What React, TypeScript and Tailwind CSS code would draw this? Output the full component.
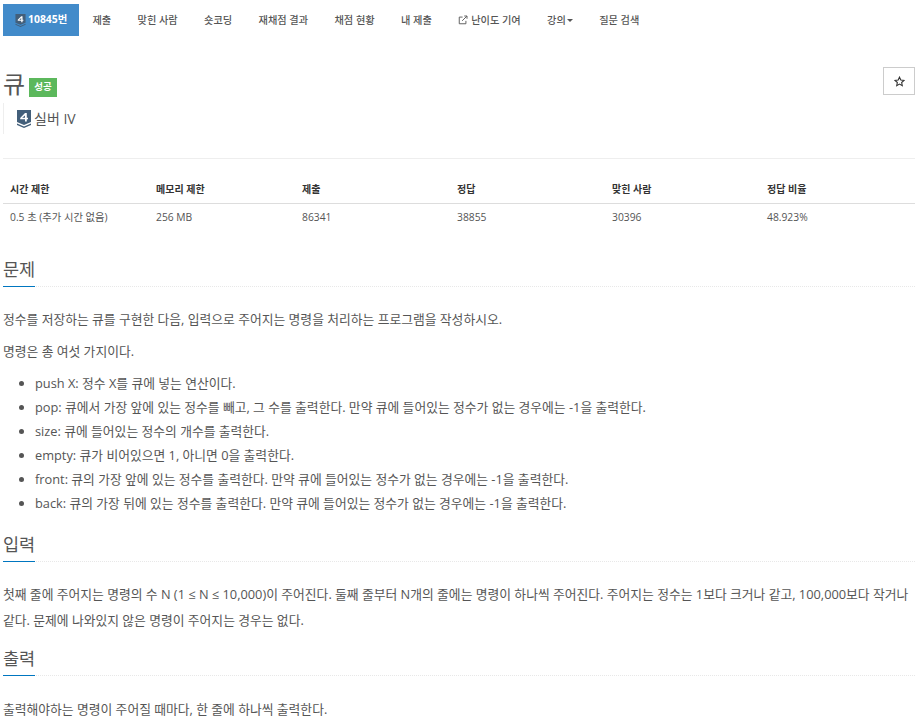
const font = "font-['Open_Sans','Noto_Sans_CJK_KR',sans-serif]";

const navItems = ["제출", "맞힌 사람", "숏코딩", "재채점 결과", "채점 현황", "내 제출"];

function TierIcon({ className }: { className: string }) {
  return (
    <svg viewBox="0 0 14 18" className={className}>
      <path d="M0 0H14V12L7 15L0 12Z" fill="#435F7A" />
      <path d="M0 13.5L7 16.5L14 13.5V15L7 18L0 15Z" fill="#435F7A" />
      <path d="M8 3H9.8V7.8H11V9.3H9.8V11.5H8V9.3H3.2V8L8 3ZM8 5.6L5.2 7.8H8Z" fill="#fff" />
    </svg>
  );
}

function SectionTitle({ title }: { title: string }) {
  return (
    <div className="border-b border-dotted border-[#e8e8e8]">
      <h2 className="inline-block border-b border-[#0076c0] text-[17.5px] leading-[26px] pb-[4px] mb-[-1px] font-normal text-[#555]">
        {title}
      </h2>
    </div>
  );
}

const listItems = [
  "push X: 정수 X를 큐에 넣는 연산이다.",
  "pop: 큐에서 가장 앞에 있는 정수를 빼고, 그 수를 출력한다. 만약 큐에 들어있는 정수가 없는 경우에는 -1을 출력한다.",
  "size: 큐에 들어있는 정수의 개수를 출력한다.",
  "empty: 큐가 비어있으면 1, 아니면 0을 출력한다.",
  "front: 큐의 가장 앞에 있는 정수를 출력한다. 만약 큐에 들어있는 정수가 없는 경우에는 -1을 출력한다.",
  "back: 큐의 가장 뒤에 있는 정수를 출력한다. 만약 큐에 들어있는 정수가 없는 경우에는 -1을 출력한다.",
];

const columns = [
  { w: "w-[146px]", head: "시간 제한", value: "0.5 초 (추가 시간 없음)" },
  { w: "w-[146px]", head: "메모리 제한", value: "256 MB" },
  { w: "w-[155px]", head: "제출", value: "86341" },
  { w: "w-[155px]", head: "정답", value: "38855" },
  { w: "w-[155px]", head: "맞힌 사람", value: "30396" },
  { w: "w-[155px]", head: "정답 비율", value: "48.923%" },
];

export default function App() {
  return (
    <div className={`${font} w-[921px] h-[722px] overflow-hidden bg-white pl-[3px] pr-[6px] pt-[4px] text-[#555]`}>
      <nav className="flex h-[32px] items-center text-[10.2px] font-medium text-[#555]">
        <a className="flex h-full items-center gap-[2px] bg-[#428bca] pl-[12px] pr-[12px] text-white font-bold">
          <TierIcon className="w-[11px] h-[13px]" />
          <span className="text-[10.4px]">10845번</span>
        </a>
        <div className="flex items-center pt-[1px]">
          {navItems.map((item) => (
            <a key={item} className="px-[13.2px]">{item}</a>
          ))}
          <a className="flex items-center gap-[3px] px-[13.2px]">
            <svg viewBox="0 0 12 12" className="w-[10px] h-[10px]" fill="none" stroke="#555" strokeWidth="1.1">
              <path d="M9.5 7V10.5H1.5V2.5H5.5" />
              <path d="M5 7L10.5 1.5M7.5 1.2H10.8V4.5" />
            </svg>
            난이도 기여
          </a>
          <a className="flex items-center gap-[1px] px-[13.2px]">
            강의
            <span className="border-x-[3px] border-t-[3px] border-x-transparent border-t-[#555]" />
          </a>
          <a className="px-[13.2px]">질문 검색</a>
        </div>
      </nav>

      <div className="mt-[32px] flex items-start justify-between">
        <div className="flex items-center h-[32px]">
          <h1 className="text-[24px] leading-[32px] font-normal text-[#555]">큐</h1>
          <span className="ml-[4px] mt-[7px] flex h-[19px] w-[28px] items-center justify-center bg-[#5cb85c] text-[9.5px] font-bold text-white">성공</span>
        </div>
        <button className="flex h-[28px] w-[32px] items-center justify-center border border-[#ccc] text-[#333] mt-[-1px]">
          <svg viewBox="0 0 24 24" className="w-[11px] h-[11px]" fill="none" stroke="#333" strokeWidth="2.4">
            <path d="M12 2.5L14.9 8.8L21.8 9.6L16.7 14.3L18.1 21.1L12 17.7L5.9 21.1L7.3 14.3L2.2 9.6L9.1 8.8Z" />
          </svg>
        </button>
      </div>

      <div className="mt-[3px] flex h-[31px] items-center gap-[3px] border-l border-[#eee] pl-[13px] text-[14px] text-[#555]">
        <TierIcon className="w-[14px] h-[18px]" />
        <span>실버 IV</span>
      </div>

      <div className="mt-[24px] border-t border-[#eee]" />

      <div className="mt-[16px]">
        <div className="flex h-[29px] items-center border-b border-[#ddd] text-[10px] font-bold text-[#333]">
          {columns.map((c) => (
            <div key={c.head} className={`${c.w} pl-[7px]`}>{c.head}</div>
          ))}
        </div>
        <div className="flex h-[27px] items-center text-[10.3px] text-[#555]">
          {columns.map((c) => (
            <div key={c.head} className={`${c.w} pl-[7px]`}>{c.value}</div>
          ))}
        </div>
      </div>

      <div className="mt-[25px]"><SectionTitle title="문제" /></div>
      <div className="mt-[16px] text-[12.8px] leading-[32px]">
        <p className="h-[32px]">정수를 저장하는 큐를 구현한 다음, 입력으로 주어지는 명령을 처리하는 프로그램을 작성하시오.</p>
        <p className="h-[32px]">명령은 총 여섯 가지이다.</p>
      </div>
      <ul className="mt-[4px] list-disc pl-[32px] text-[12.8px] leading-[24px] marker:text-[#555]">
        {listItems.map((item) => (
          <li key={item}>{item}</li>
        ))}
      </ul>

      <div className="mt-[16px]"><SectionTitle title="입력" /></div>
      <p className="mt-[19px] text-[12.8px] leading-[26px]">
        첫째 줄에 주어지는 명령의 수 N (1 ≤ N ≤ 10,000)이 주어진다. 둘째 줄부터 N개의 줄에는 명령이 하나씩 주어진다. 주어지는 정수는 1보다 크거나 같고, 100,000보다 작거나 같다. 문제에 나와있지 않은 명령이 주어지는 경우는 없다.
      </p>

      <div className="mt-[12px]"><SectionTitle title="출력" /></div>
      <p className="mt-[20px] text-[12.8px] leading-[26px]">출력해야하는 명령이 주어질 때마다, 한 줄에 하나씩 출력한다.</p>
    </div>
  );
}
